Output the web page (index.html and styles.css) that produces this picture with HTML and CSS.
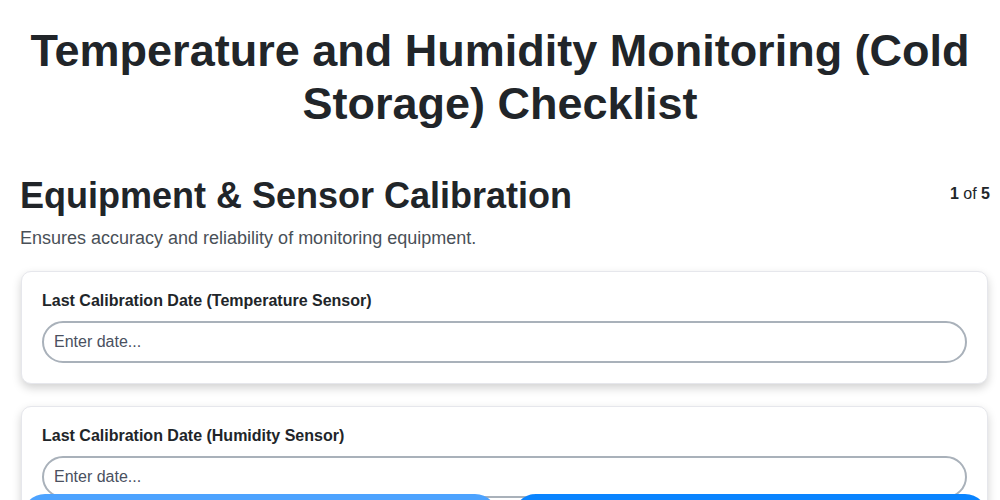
FILE: index.html
```html
<!DOCTYPE html>
<html lang="en">
<head>
<meta charset="utf-8">
<title>Checklist</title>
<link rel="stylesheet" href="styles.css">
</head>
<body>
<main class="page">
  <h1 class="title">Temperature and Humidity Monitoring (Cold Storage) Checklist</h1>
  <section class="section">
    <div class="section-head">
      <h2 class="section-title">Equipment &amp; Sensor Calibration</h2>
      <div class="step"><b>1</b> of <b>5</b></div>
    </div>
    <p class="section-desc">Ensures accuracy and reliability of monitoring equipment.</p>
    <div class="card">
      <label class="label">Last Calibration Date (Temperature Sensor)</label>
      <input class="input" type="text" placeholder="Enter date...">
    </div>
    <div class="card">
      <label class="label">Last Calibration Date (Humidity Sensor)</label>
      <input class="input" type="text" placeholder="Enter date...">
    </div>
    <div class="card">
      <label class="label">Calibration Certificate Number</label>
      <input class="input" type="text" placeholder="Enter text...">
    </div>
  </section>
</main>
<footer class="nav">
  <button class="btn btn-prev">Previous</button>
  <button class="btn btn-next">Next</button>
</footer>
</body>
</html>
```
FILE: styles.css
```css
* { box-sizing: border-box; }
html, body { margin: 0; padding: 0; background: #fff; }
body {
  font-family: "Liberation Sans", Arial, sans-serif;
  color: #212529;
}
.page { padding: 20px 10px 0 10px; }
.title {
  margin: 4px 0 44px;
  text-align: center;
  font-size: 45px;
  line-height: 53px;
  font-weight: 700;
  color: #212529;
}
.section { padding-left: 10px; }
.section-head {
  display: flex;
  justify-content: space-between;
  align-items: center;
}
.section-title {
  margin: 0;
  font-size: 36px;
  line-height: 44px;
  font-weight: 700;
}
.step { font-size: 16px; color: #212529; margin-top: -4px; }
.section-desc {
  margin: 10px 0 22px;
  font-size: 18px;
  color: #495057;
}
.card {
  margin: 0 2px 22px 1px;
  padding: 20px 20px 20px 20px;
  background: #fff;
  border: 1px solid #e6e7ec;
  border-radius: 10px;
  box-shadow: 0 4px 10px rgba(0,0,0,0.18);
}
.label {
  display: block;
  margin-bottom: 11px;
  font-size: 16px;
  font-weight: 700;
  color: #212529;
}
.input {
  display: block;
  width: 100%;
  height: 42px;
  padding: 0 10px;
  border: 2px solid #a9b1ba;
  border-radius: 21px;
  font-family: inherit;
  font-size: 16px;
  color: #495057;
  background: #fff;
}
.input::placeholder { color: #4a5060; }
.nav {
  position: fixed;
  left: 22px;
  right: 12px;
  bottom: -40px;
  display: flex;
  gap: 15px;
}
.btn {
  flex: 1;
  height: 46px;
  border: none;
  border-radius: 23px;
  color: #fff;
  font-family: inherit;
  font-size: 17px;
  font-weight: 700;
}
.btn-prev { background: #4da3ff; }
.btn-next { background: #0a84ff; }
```
